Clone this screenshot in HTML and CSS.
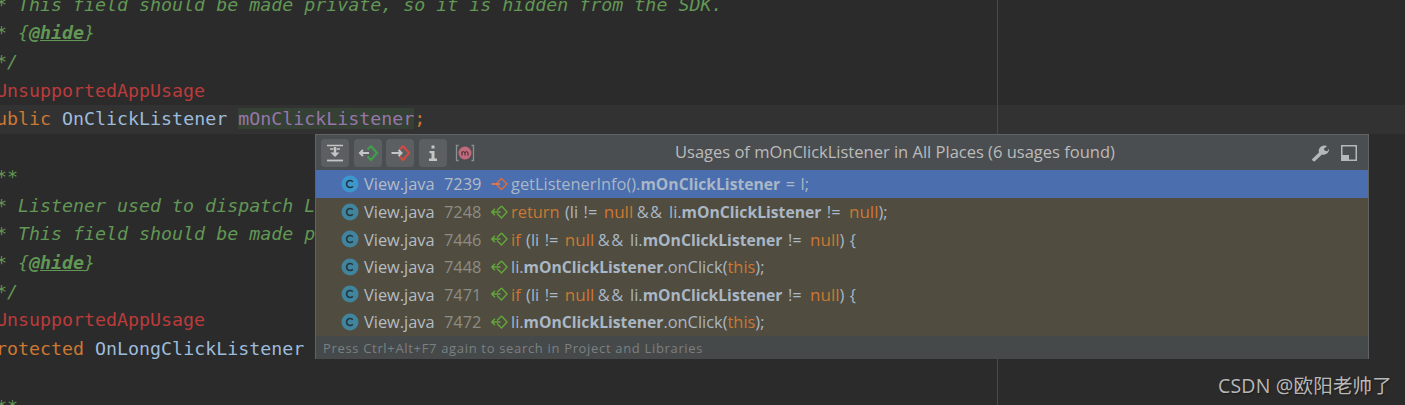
FILE: index.html
```html
<!DOCTYPE html>
<html lang="en">
<head>
<meta charset="utf-8">
<title>Usages of mOnClickListener</title>
<link rel="stylesheet" href="styles.css">
</head>
<body>
<svg class="defs" width="0" height="0" aria-hidden="true">
  <symbol id="cls" viewBox="0 0 18 18">
    <circle cx="9" cy="9" r="8.5" fill="currentColor"/>
    <path d="M11.8 6.8A3.5 3.5 0 1 0 11.8 11.2" fill="none" stroke="#24353d" stroke-width="1.6"/>
  </symbol>
  <symbol id="read" viewBox="0 0 17 14">
    <path d="M10.500 1L16 7L10.500 13L6 8.500M6 5.500L10.500 1" fill="none" stroke="#62a73c" stroke-width="1.4"/>
    <path d="M.500 7H9.500M4 3.800L.800 7L4 10.200" fill="none" stroke="#62a73c" stroke-width="1.4"/>
  </symbol>
  <symbol id="write" viewBox="0 0 17 14">
    <path d="M10.500 1.500L16 7L10.500 12.500L5 7Z" fill="none" stroke="#dd6a3a" stroke-width="1.4"/>
    <path d="M.500 7H9" fill="none" stroke="#ee7a42" stroke-width="1.6"/>
  </symbol>
</svg>

<main class="editor">
  <div class="code">
    <div class="line cm"> * This field should be made private, so it is hidden from the SDK.</div>
    <div class="line cm"> * {<span class="tag">@hide</span>}</div>
    <div class="line cm"> */</div>
    <div class="line an">@UnsupportedAppUsage</div>
    <div class="line current"><span class="kw">public</span> <span class="ty">OnClickListener</span> <span class="usage">mOnClickListener</span><span class="kw">;</span></div>
    <div class="line"> </div>
    <div class="line cm">/**</div>
    <div class="line cm"> * Listener used to dispatch L</div>
    <div class="line cm"> * This field should be made p</div>
    <div class="line cm"> * {<span class="tag">@hide</span>}</div>
    <div class="line cm"> */</div>
    <div class="line an">@UnsupportedAppUsage</div>
    <div class="line"><span class="kw">protected</span> <span class="ty">OnLongClickListener</span></div>
    <div class="line"> </div>
    <div class="line cm">/**</div>
  </div>
  <div class="margin-line"></div>
</main>

<section class="popup">
  <header class="bar">
    <div class="tools">
      <button class="tool" aria-label="Merge usages">
        <svg width="22" height="22" viewBox="0 0 22 22"><path d="M3 3.5H19M6 7H9.5M12.5 7H16" stroke="#c4c6c6" stroke-width="1.6" fill="none"/><path d="M11 5V14" stroke="#c4c6c6" stroke-width="2.4"/><path d="M6.5 10.5L11 15L15.5 10.5Z" fill="#c4c6c6"/><path d="M3 18.5H19" stroke="#c4c6c6" stroke-width="1.8"/></svg>
      </button>
      <button class="tool" aria-label="Show read access">
        <svg width="22" height="22" viewBox="0 0 22 22"><path d="M14 4L20 11L14 18L10.500 14.500M10.500 7.500L14 4" fill="none" stroke="#3f9f4a" stroke-width="2.200"/><path d="M3 11H12M6 8L3 11L6 14" fill="none" stroke="#c4c6c6" stroke-width="2"/></svg>
      </button>
      <button class="tool" aria-label="Show write access">
        <svg width="22" height="22" viewBox="0 0 22 22"><path d="M14 4L20 11L14 18L10.500 14.500M10.500 7.500L14 4" fill="none" stroke="#cf4a42" stroke-width="2.200"/><path d="M2.500 11H12M9.500 8L12.500 11L9.500 14" fill="none" stroke="#c4c6c6" stroke-width="2"/></svg>
      </button>
      <button class="tool" aria-label="Show info">
        <svg width="22" height="22" viewBox="0 0 22 22"><path d="M9.500 3.500H12.500V6.500H9.500ZM7.500 9H12.500V16.500H15V19H7V16.500H9.500V11.200H7.500Z" fill="#c4c6c6"/></svg>
      </button>
      <span class="member" aria-label="Field filter">
        <svg width="22" height="22" viewBox="0 0 22 22"><path d="M4.500 3.500H2.500V18.500H4.500M17.500 3.500H19.500V18.500H17.500" fill="none" stroke="#8d9092" stroke-width="1.300"/><circle cx="11" cy="11" r="6.500" fill="#c06a7c"/><path d="M8 13.500V9.500M8 10.500Q9.500 8.700 11 10.500V13.500M11 10.500Q12.500 8.700 14 10.500V13.500" fill="none" stroke="#3b2a30" stroke-width="1"/></svg>
      </span>
    </div>
    <h1 class="title">Usages of mOnClickListener in All Places (6 usages found)</h1>
    <div class="actions">
      <svg width="20" height="20" viewBox="0 0 20 20"><path d="M3 18L1.800 16.500L9 9.500C8 6.500 10 2.500 14.500 2.500C15.500 2.500 16.500 2.800 17 3.200L13.800 5.800L14.800 7.800L17.200 8.300L19 5.800C19.500 9 16.500 12.500 12 11.500L4.500 18.500Z" fill="#b5b8ba"/></svg>
      <svg width="16" height="16" viewBox="0 0 16 16"><path d="M.750.750H15.250V15.250H.750Z" fill="none" stroke="#b5b8ba" stroke-width="1.500"/><path d="M1 10H8V15H1Z" fill="#b5b8ba"/></svg>
    </div>
  </header>

  <ul class="rows">
    <li class="row selected">
      <svg class="cls" width="18" height="18"><use href="#cls"/></svg>
      <span class="file">View.java</span><span class="num">7239</span>
      <svg class="access" width="17" height="14"><use href="#write"/></svg>
      <span class="src">getListenerInfo().<b>mOnClickListener</b> = l;</span>
    </li>
    <li class="row">
      <svg class="cls" width="18" height="18"><use href="#cls"/></svg>
      <span class="file">View.java</span><span class="num">7248</span>
      <svg class="access" width="17" height="14"><use href="#read"/></svg>
      <span class="src"><i>return</i> (li != <i class="nl">null</i> <span class="amp">&amp;&amp;</span> li.<b>mOnClickListener</b> != <i class="nl end">null</i>);</span>
    </li>
    <li class="row">
      <svg class="cls" width="18" height="18"><use href="#cls"/></svg>
      <span class="file">View.java</span><span class="num">7446</span>
      <svg class="access" width="17" height="14"><use href="#read"/></svg>
      <span class="src"><i>if</i> (li != <i class="nl">null</i> <span class="amp">&amp;&amp;</span> li.<b>mOnClickListener</b> != <i class="nl end">null</i>) {</span>
    </li>
    <li class="row">
      <svg class="cls" width="18" height="18"><use href="#cls"/></svg>
      <span class="file">View.java</span><span class="num">7448</span>
      <svg class="access" width="17" height="14"><use href="#read"/></svg>
      <span class="src">li.<b>mOnClickListener</b>.onClick(<i>this</i>);</span>
    </li>
    <li class="row">
      <svg class="cls" width="18" height="18"><use href="#cls"/></svg>
      <span class="file">View.java</span><span class="num">7471</span>
      <svg class="access" width="17" height="14"><use href="#read"/></svg>
      <span class="src"><i>if</i> (li != <i class="nl">null</i> <span class="amp">&amp;&amp;</span> li.<b>mOnClickListener</b> != <i class="nl end">null</i>) {</span>
    </li>
    <li class="row">
      <svg class="cls" width="18" height="18"><use href="#cls"/></svg>
      <span class="file">View.java</span><span class="num">7472</span>
      <svg class="access" width="17" height="14"><use href="#read"/></svg>
      <span class="src">li.<b>mOnClickListener</b>.onClick(<i>this</i>);</span>
    </li>
  </ul>

  <footer class="hint">Press Ctrl+Alt+F7 again to search in Project and Libraries</footer>
</section>

<div class="watermark">CSDN @欧阳老帅了</div>
</body>
</html>
```

FILE: styles.css
```css
* { box-sizing: border-box; }
html, body {
  margin: 0;
  height: 405px;
  overflow: hidden;
  background: #2b2b2b;
}
.defs { position: absolute; }

.editor {
  position: relative;
  height: 405px;
  overflow: hidden;
}
.code {
  margin: -9.5px 0 0 -15px;
  font: 18.3px/28.72px "DejaVu Sans Mono", monospace;
  color: #a9b7c6;
}
.line { height: 28.72px; white-space: pre; }
.cm { color: #629755; font-style: italic; }
.tag { text-decoration: underline; font-weight: bold; }
.an { color: #bb3b3b; }
.kw { color: #cc7832; }
.ty { color: #9dbcdc; }
.current { background: #323232; }
.usage { background: #344134; color: #9876aa; }
.margin-line {
  position: absolute;
  left: 997px;
  top: 0;
  bottom: 0;
  width: 1px;
  background: #4a4a4a;
}

.popup {
  position: absolute;
  left: 315px;
  top: 134px;
  width: 1054px;
  height: 225px;
  border: 1px solid #616365;
  display: flex;
  flex-direction: column;
  font-family: "Open Sans", sans-serif;
  font-size: 16.4px;
  color: #a9b7c6;
}
.bar {
  height: 35px;
  flex: none;
  background: #4b4e50;
  display: flex;
  align-items: center;
  position: relative;
  padding: 0 11px 0 5px;
}
.tools { display: flex; align-items: center; gap: 4.5px; }
.tool {
  width: 28px;
  height: 28px;
  padding: 0;
  border: 0;
  border-radius: 4px;
  background: #5c5f61;
  display: flex;
  align-items: center;
  justify-content: center;
}
.member { display: flex; margin-left: 3px; }
.title {
  position: absolute;
  left: 359px;
  top: 0;
  margin: 0;
  font-size: 16.5px;
  font-weight: 400;
  line-height: 33px;
  color: #bbbbbb;
  white-space: nowrap;
}
.actions {
  margin-left: auto;
  display: flex;
  align-items: center;
  gap: 11px;
}

.rows {
  flex: 1;
  margin: 0;
  padding: 0;
  list-style: none;
  background: #504c3f;
}
.row {
  height: 27.5px;
  display: flex;
  align-items: center;
  padding-left: 25px;
  white-space: pre;
}
.row.selected { height: 28px; padding-bottom: 1px; background: #4b6eaf; }
.cls { color: #40849e; flex: none; margin-right: 5px; }
.selected .cls { color: #3d97cf; }
.file { width: 80px; color: #b4bcc4; }
.num { width: 47px; color: #8d8c84; }
.selected .num { color: #b4bcc4; }
.access { flex: none; margin-right: 3px; }
.src { color: #a9b7c6; word-spacing: 1.2px; }
.src b { font-weight: 700; font-size: 15.7px; }
.src i { font-style: normal; color: #cc7832; }
.src .nl { margin: 0 -2px 0 1px; font-size: 17px; }
.src .nl.end { margin: 0 0 0 3px; }
.amp { letter-spacing: 1.5px; }

.hint {
  height: 23px;
  flex: none;
  padding-left: 7px;
  background: #45494a;
  font-family: "Open Sans", sans-serif;
  font-size: 13px;
  letter-spacing: 0.67px;
  line-height: 25px;
  color: #7b8082;
  white-space: nowrap;
}

.watermark {
  position: absolute;
  right: 13px;
  top: 373px;
  font: 19.5px/26px "Open Sans", "Noto Sans CJK SC", sans-serif;
  letter-spacing: 0.2px;
  color: #b8b8b8;
  text-shadow: 1px 1px 1px #1c1c1c;
  white-space: nowrap;
}
```
